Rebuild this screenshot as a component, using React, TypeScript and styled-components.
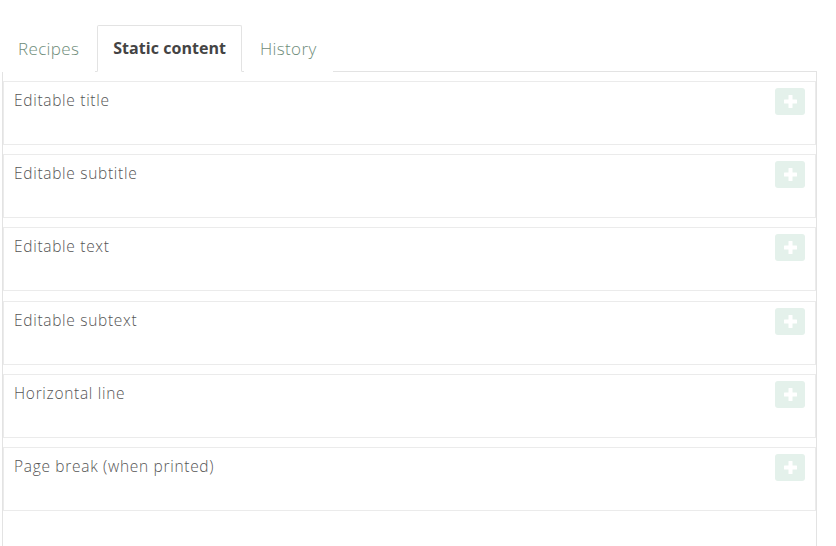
import React from "react";
import styled, { createGlobalStyle } from "styled-components";

const GlobalStyle = createGlobalStyle`
  html, body { margin: 0; padding: 0; background: #ffffff; }
  body { font-family: "Open Sans", "Lato", sans-serif; }
`;

const Page = styled.div`
  padding: 25px 0 0 2px;
  width: 815px;
`;

const TabBar = styled.ul`
  display: flex;
  list-style: none;
  margin: 0;
  padding: 0;
  border-bottom: 1px solid #e3e3e3;
`;

const Tab = styled.li<{ $active?: boolean }>`
  margin: 0 2px -1px 0;
  padding: 10px 15px 10px;
  font-size: ${(p) => (p.$active ? "16px" : "17px")};
  line-height: 25px;
  border: 1px solid ${(p) => (p.$active ? "#e3e3e3" : "transparent")};
  border-bottom-color: ${(p) => (p.$active ? "#ffffff" : "transparent")};
  border-radius: 2px 2px 0 0;
  background: #ffffff;
  color: ${(p) => (p.$active ? "#444444" : "#6e8c79")};
  font-weight: ${(p) => (p.$active ? 700 : 300)};
  letter-spacing: ${(p) => (p.$active ? "0.05px" : "0.35px")};
`;

const Panel = styled.div`
  border: 1px solid #e3e3e3;
  border-top: none;
  padding: 9px 0 40px;
  display: flex;
  flex-direction: column;
  gap: 9.2px;
`;

const Item = styled.div`
  display: flex;
  align-items: flex-start;
  justify-content: space-between;
  height: 64px;
  box-sizing: border-box;
  border: 1px solid #ebebeb;
  padding: 6px 10px 0 10px;
`;

const Label = styled.span`
  font-size: 15.5px;
  line-height: 24px;
  letter-spacing: 0.7px;
  color: #555555;
  font-weight: 300;
`;

const AddButton = styled.button`
  display: flex;
  align-items: center;
  justify-content: center;
  width: 30px;
  height: 27px;
  padding: 0;
  border: none;
  border-radius: 3px;
  background: #e4f1eb;
  cursor: pointer;
`;

const items = [
  "Editable title",
  "Editable subtitle",
  "Editable text",
  "Editable subtext",
  "Horizontal line",
  "Page break (when printed)",
];

const Plus = () => (
  <svg width="13" height="13" viewBox="0 0 13 13">
    <rect x="4.5" y="0" width="4" height="13" rx="0.5" fill="#ffffff" />
    <rect x="0" y="4.5" width="13" height="4" rx="0.5" fill="#ffffff" />
  </svg>
);

export default function App() {
  return (
    <>
      <GlobalStyle />
      <Page>
        <TabBar>
          <Tab>Recipes</Tab>
          <Tab $active>Static content</Tab>
          <Tab>History</Tab>
        </TabBar>
        <Panel>
          {items.map((t) => (
            <Item key={t}>
              <Label>{t}</Label>
              <AddButton aria-label="Add">
                <Plus />
              </AddButton>
            </Item>
          ))}
        </Panel>
      </Page>
    </>
  );
}
